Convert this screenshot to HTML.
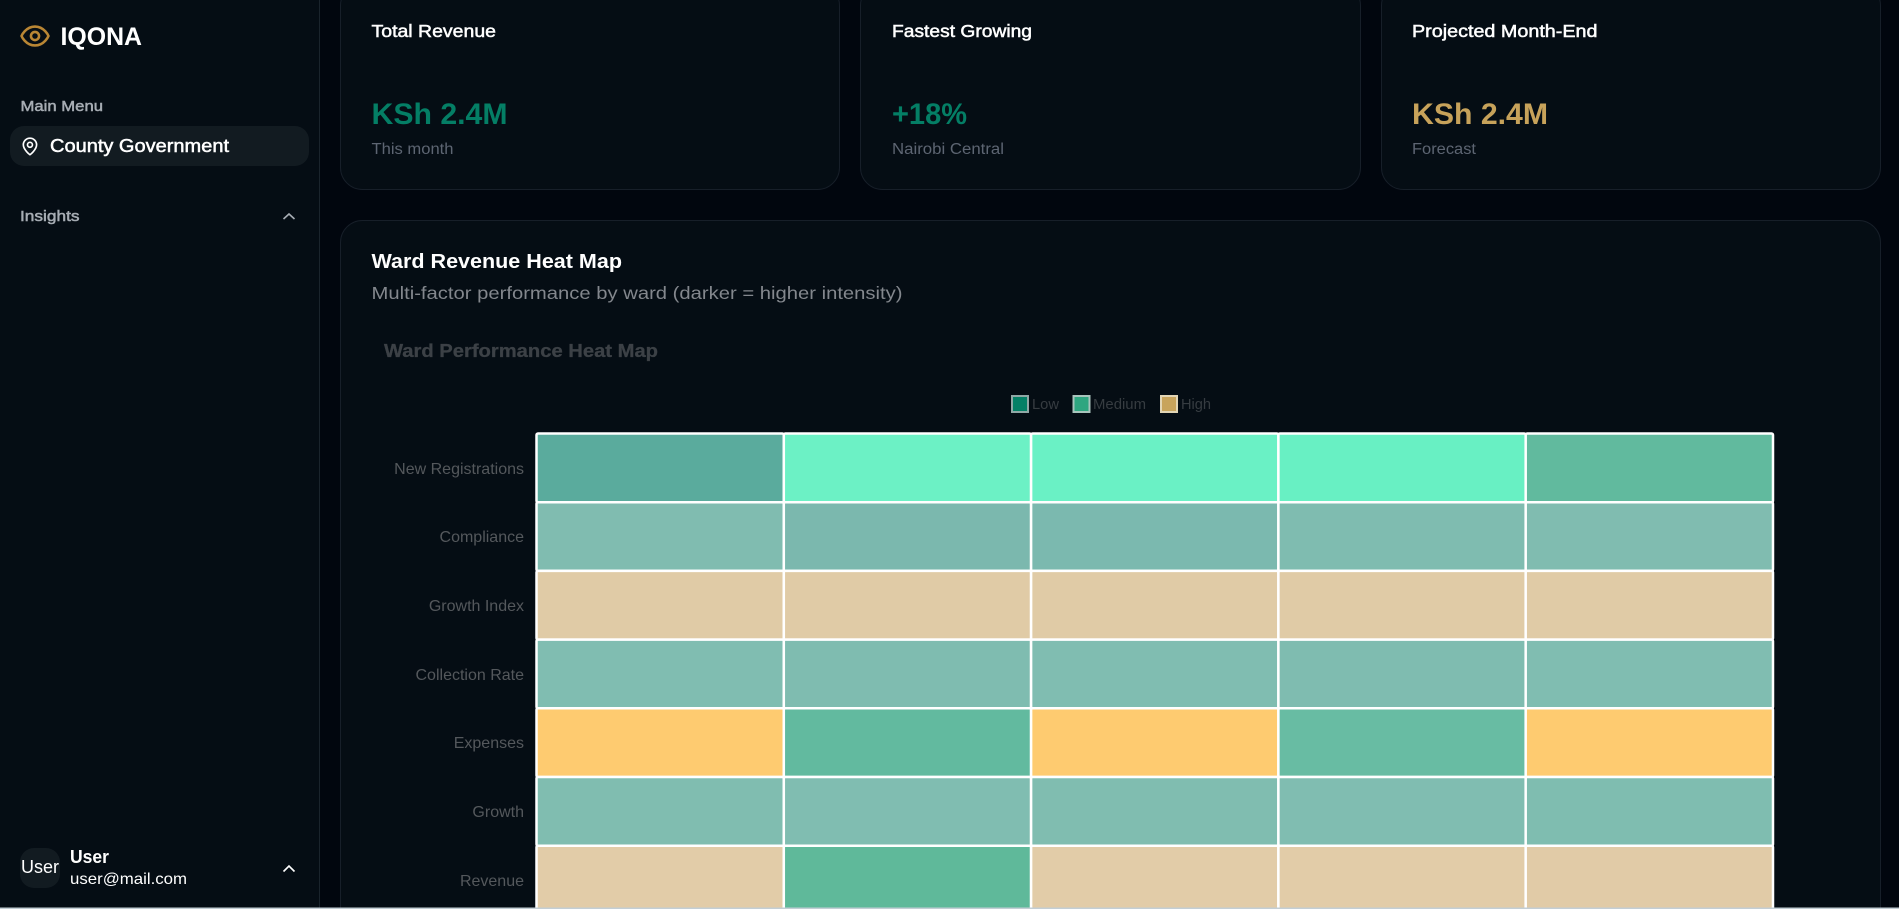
<!DOCTYPE html>
<html lang="en">
<head>
<meta charset="utf-8">
<title>IQONA</title>
<style>
html,body{margin:0;padding:0;width:1899px;height:909px;overflow:hidden;background:#01060e}
svg{display:block;position:absolute;left:0;top:0}
text{font-family:"Liberation Sans",Arial,sans-serif;white-space:pre}
.m{stroke-width:.5px;paint-order:stroke}
</style>
</head>
<body>
<svg width="1899" height="909" viewBox="0 0 1899 909" xmlns="http://www.w3.org/2000/svg">
  <rect width="1899" height="909" fill="#01060e"/>

  <!-- Sidebar -->
  <rect x="0" y="0" width="319" height="909" fill="#050d14"/>
  <rect x="319" y="0" width="1" height="909" fill="#1a242c"/>

  <g transform="translate(18.8 19.8) scale(1.35)" fill="none" stroke="#b98634" stroke-width="1.9" stroke-linecap="round" stroke-linejoin="round">
    <path d="M2 12s3-7 10-7 10 7 10 7-3 7-10 7-10-7-10-7Z"/>
    <circle cx="12" cy="12" r="3"/>
  </g>
  <text x="60.5" y="45" font-size="25" font-weight="700" fill="#fff" textLength="81.5" lengthAdjust="spacingAndGlyphs">IQONA</text>

  <text class="m" x="20.5" y="111" font-size="15" fill="#a7adb4" stroke="#a7adb4" textLength="82.5" lengthAdjust="spacingAndGlyphs">Main Menu</text>

  <rect x="10" y="126" width="299" height="40" rx="14" fill="#121b21"/>
  <g transform="translate(20 136.5) scale(.83)" fill="none" stroke="#fff" stroke-width="2" stroke-linecap="round" stroke-linejoin="round">
    <path d="M20 10c0 6-8 12-8 12s-8-6-8-12a8 8 0 0 1 16 0Z"/>
    <circle cx="12" cy="10" r="3"/>
  </g>
  <text class="m" x="50" y="152" font-size="18" fill="#fff" stroke="#fff" textLength="179" lengthAdjust="spacingAndGlyphs">County Government</text>

  <text class="m" x="20" y="221" font-size="15" fill="#a7adb4" stroke="#a7adb4" textLength="59.5" lengthAdjust="spacingAndGlyphs">Insights</text>
  <polyline points="283.5,219 289,214 294.5,219" fill="none" stroke="#a7adb4" stroke-width="1.6"/>

  <rect x="20" y="848" width="40" height="40" rx="14" fill="#121b21"/>
  <text x="21" y="873" font-size="18" fill="#fff" textLength="38" lengthAdjust="spacingAndGlyphs">User</text>
  <text x="70" y="863" font-size="18" font-weight="700" fill="#fff" textLength="39" lengthAdjust="spacingAndGlyphs">User</text>
  <text x="70" y="884" font-size="16" fill="#fff" textLength="117" lengthAdjust="spacingAndGlyphs">user@mail.com</text>
  <polyline points="283.5,871.5 289,866 294.5,871.5" fill="none" stroke="#fff" stroke-width="1.6"/>

  <!-- Stat cards -->
  <rect x="340.5" y="-16.5" width="499" height="206" rx="22" fill="#050d14" stroke="#171f29"/>
  <rect x="860.5" y="-16.5" width="500" height="206" rx="22" fill="#050d14" stroke="#171f29"/>
  <rect x="1381.5" y="-16.5" width="499" height="206" rx="22" fill="#050d14" stroke="#171f29"/>

  <text class="m" x="371.5" y="37" font-size="17.5" fill="#fff" stroke="#fff" textLength="124.5" lengthAdjust="spacingAndGlyphs">Total Revenue</text>
  <text x="371.5" y="124" font-size="30" font-weight="700" fill="#047e65" textLength="136" lengthAdjust="spacingAndGlyphs">KSh 2.4M</text>
  <text x="371.5" y="154" font-size="15.5" fill="#5d6572" textLength="82" lengthAdjust="spacingAndGlyphs">This month</text>

  <text class="m" x="892" y="37" font-size="17.5" fill="#fff" stroke="#fff" textLength="140" lengthAdjust="spacingAndGlyphs">Fastest Growing</text>
  <text x="892" y="124" font-size="30" font-weight="700" fill="#047e65" textLength="75" lengthAdjust="spacingAndGlyphs">+18%</text>
  <text x="892" y="154" font-size="15.5" fill="#5d6572" textLength="112" lengthAdjust="spacingAndGlyphs">Nairobi Central</text>

  <text class="m" x="1412" y="37" font-size="17.5" fill="#fff" stroke="#fff" textLength="185.5" lengthAdjust="spacingAndGlyphs">Projected Month-End</text>
  <text x="1412" y="124" font-size="30" font-weight="700" fill="#c7a25a" textLength="136" lengthAdjust="spacingAndGlyphs">KSh 2.4M</text>
  <text x="1412" y="154" font-size="15.5" fill="#5d6572" textLength="64" lengthAdjust="spacingAndGlyphs">Forecast</text>

  <!-- Main card -->
  <rect x="340.5" y="220.5" width="1540" height="720" rx="22" fill="#050d14" stroke="#171f29"/>
  <text x="371.5" y="268" font-size="20" font-weight="700" fill="#fff" textLength="250.5" lengthAdjust="spacingAndGlyphs">Ward Revenue Heat Map</text>
  <text x="371.5" y="299" font-size="17.5" fill="#83878d" textLength="531" lengthAdjust="spacingAndGlyphs">Multi-factor performance by ward (darker = higher intensity)</text>

  <text x="384" y="357" font-size="18" font-weight="700" fill="#3c4146" stroke="#3c4146" stroke-width=".3" textLength="274" lengthAdjust="spacingAndGlyphs">Ward Performance Heat Map</text>

  <!-- Legend -->
  <rect x="1012" y="396" width="16" height="16" fill="#048066" stroke="#90a8a6" stroke-width="2"/>
  <text x="1032" y="409" font-size="15" fill="#363c41" textLength="27" lengthAdjust="spacingAndGlyphs">Low</text>
  <rect x="1073.5" y="396" width="16" height="16" fill="#2fa680" stroke="#a9c4bc" stroke-width="2"/>
  <text x="1093" y="409" font-size="15" fill="#363c41" textLength="53" lengthAdjust="spacingAndGlyphs">Medium</text>
  <rect x="1161" y="396" width="16" height="16" fill="#c8a45c" stroke="#e2d5b5" stroke-width="2"/>
  <text x="1181" y="409" font-size="15" fill="#363c41" textLength="30" lengthAdjust="spacingAndGlyphs">High</text>

  <!-- Row labels -->
  <g font-size="16" fill="#54585c" text-anchor="end">
    <text x="524" y="474">New Registrations</text>
    <text x="524" y="542">Compliance</text>
    <text x="524" y="611">Growth Index</text>
    <text x="524" y="680">Collection Rate</text>
    <text x="524" y="748">Expenses</text>
    <text x="524" y="817">Growth</text>
    <text x="524" y="886">Revenue</text>
  </g>

  <!-- Heat map cells -->
  <g stroke="#fff" stroke-width="2.5">
    <rect x="536.5" y="433.5" width="247.3" height="68.7" rx="1.5" fill="#5aab9d"/>
    <rect x="783.8" y="433.5" width="247.3" height="68.7" rx="1.5" fill="#6cf1c5"/>
    <rect x="1031.1" y="433.5" width="247.3" height="68.7" rx="1.5" fill="#6af1c5"/>
    <rect x="1278.4" y="433.5" width="247.3" height="68.7" rx="1.5" fill="#68f0c3"/>
    <rect x="1525.7" y="433.5" width="247.3" height="68.7" rx="1.5" fill="#61ba9e"/>

    <rect x="536.5" y="502.2" width="247.3" height="68.7" rx="1.5" fill="#80bcb0"/>
    <rect x="783.8" y="502.2" width="247.3" height="68.7" rx="1.5" fill="#7bb8ae"/>
    <rect x="1031.1" y="502.2" width="247.3" height="68.7" rx="1.5" fill="#7bb9af"/>
    <rect x="1278.4" y="502.2" width="247.3" height="68.7" rx="1.5" fill="#7fbcb0"/>
    <rect x="1525.7" y="502.2" width="247.3" height="68.7" rx="1.5" fill="#80bcb0"/>

    <rect x="536.5" y="570.9" width="247.3" height="68.7" rx="1.5" fill="#e0cba6"/>
    <rect x="783.8" y="570.9" width="247.3" height="68.7" rx="1.5" fill="#e0cba6"/>
    <rect x="1031.1" y="570.9" width="247.3" height="68.7" rx="1.5" fill="#e0cba6"/>
    <rect x="1278.4" y="570.9" width="247.3" height="68.7" rx="1.5" fill="#e0cba6"/>
    <rect x="1525.7" y="570.9" width="247.3" height="68.7" rx="1.5" fill="#e0cba6"/>

    <rect x="536.5" y="639.6" width="247.3" height="68.7" rx="1.5" fill="#80bdb1"/>
    <rect x="783.8" y="639.6" width="247.3" height="68.7" rx="1.5" fill="#7fbcb0"/>
    <rect x="1031.1" y="639.6" width="247.3" height="68.7" rx="1.5" fill="#80bdb1"/>
    <rect x="1278.4" y="639.6" width="247.3" height="68.7" rx="1.5" fill="#7fbcb0"/>
    <rect x="1525.7" y="639.6" width="247.3" height="68.7" rx="1.5" fill="#80bdb1"/>

    <rect x="536.5" y="708.3" width="247.3" height="68.7" rx="1.5" fill="#fecb70"/>
    <rect x="783.8" y="708.3" width="247.3" height="68.7" rx="1.5" fill="#62ba9f"/>
    <rect x="1031.1" y="708.3" width="247.3" height="68.7" rx="1.5" fill="#fecb70"/>
    <rect x="1278.4" y="708.3" width="247.3" height="68.7" rx="1.5" fill="#68bca3"/>
    <rect x="1525.7" y="708.3" width="247.3" height="68.7" rx="1.5" fill="#fecb70"/>

    <rect x="536.5" y="777" width="247.3" height="68.7" rx="1.5" fill="#80bdb0"/>
    <rect x="783.8" y="777" width="247.3" height="68.7" rx="1.5" fill="#80bdb1"/>
    <rect x="1031.1" y="777" width="247.3" height="68.7" rx="1.5" fill="#80bdb0"/>
    <rect x="1278.4" y="777" width="247.3" height="68.7" rx="1.5" fill="#80bdb1"/>
    <rect x="1525.7" y="777" width="247.3" height="68.7" rx="1.5" fill="#7fbdb0"/>

    <rect x="536.5" y="845.7" width="247.3" height="68.7" rx="1.5" fill="#e2cca8"/>
    <rect x="783.8" y="845.7" width="247.3" height="68.7" rx="1.5" fill="#5fb99a"/>
    <rect x="1031.1" y="845.7" width="247.3" height="68.7" rx="1.5" fill="#e2cca8"/>
    <rect x="1278.4" y="845.7" width="247.3" height="68.7" rx="1.5" fill="#e2cca8"/>
    <rect x="1525.7" y="845.7" width="247.3" height="68.7" rx="1.5" fill="#e1cba7"/>
  </g>

  <!-- Bottom edge -->
  <rect x="0" y="907.5" width="1899" height="1.5" fill="#c3ced5"/>
</svg>
</body>
</html>
